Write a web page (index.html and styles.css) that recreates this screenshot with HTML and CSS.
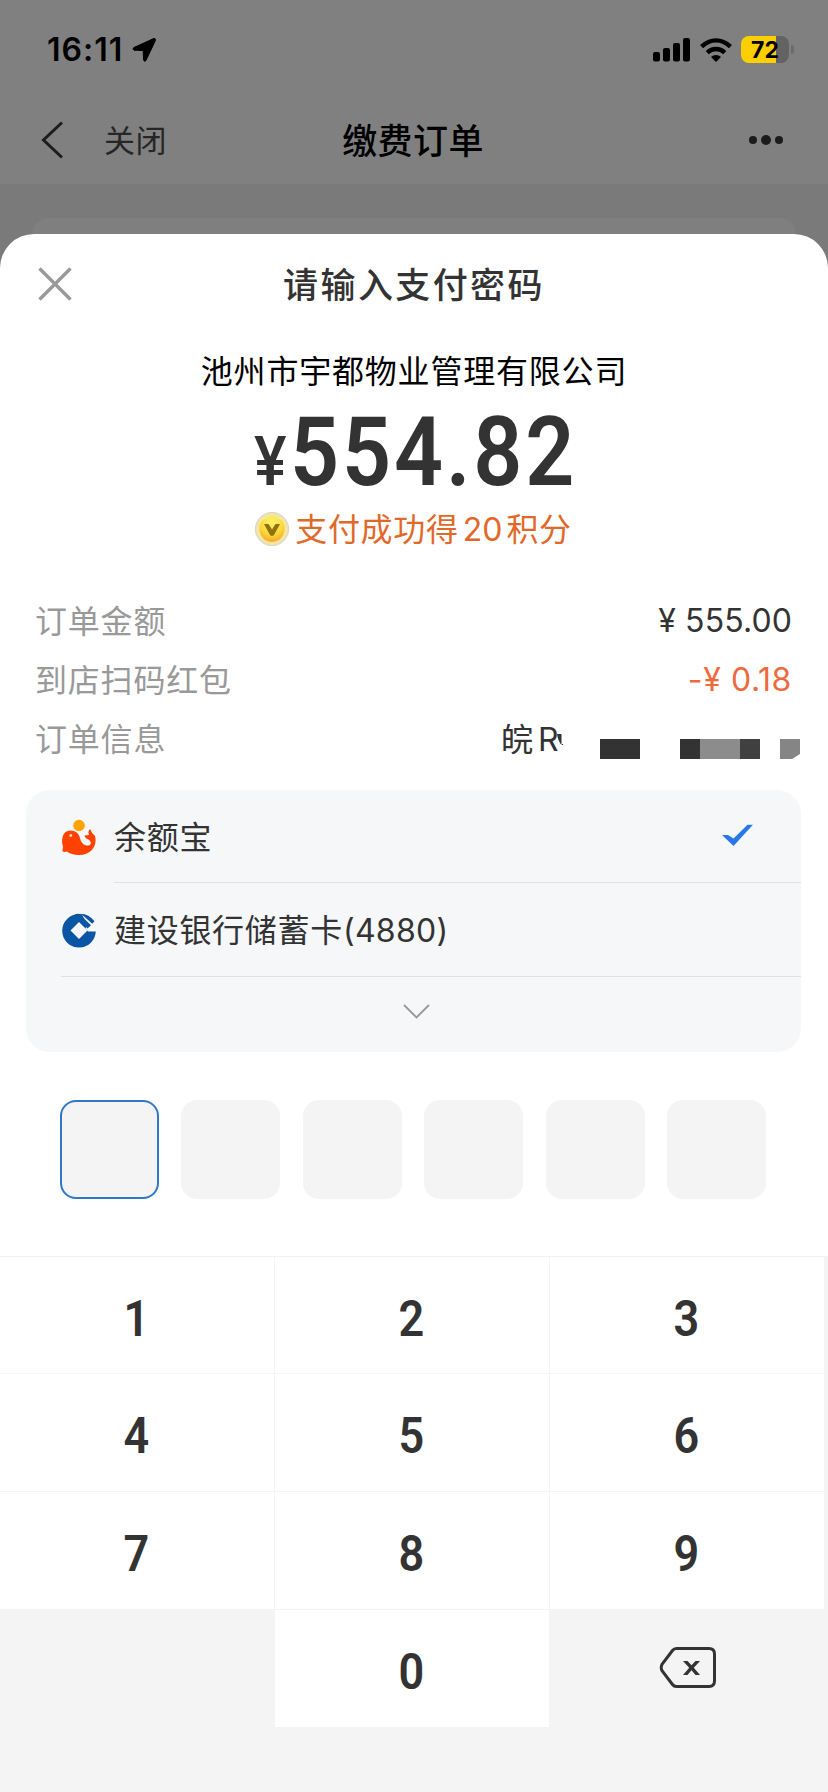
FILE: index.html
```html
<!DOCTYPE html>
<html lang="zh-CN">
<head>
<meta charset="utf-8">
<title>缴费订单</title>
<link rel="stylesheet" href="styles.css">
</head>
<body>
<div class="screen">
  <header class="top">
    <div class="status">
      <span class="time">16:11</span>
      <svg class="locate" width="26" height="26" viewBox="0 0 26 26"><path d="M22.6 1.6 2.8 10.6Q1 12.3 3 13.2L12.2 13.6 12.6 23.2Q13.6 25.2 15 23.4L24.5 3.2Q24.6 1 22.6 1.6Z" fill="#000" stroke="#000" stroke-linejoin="round"/></svg>
      <svg class="signal" width="37" height="24" viewBox="0 0 37 24"><rect y="14" width="7" height="9.5" rx="2"/><rect x="10" y="10" width="7" height="13.5" rx="2"/><rect x="20" y="5" width="7" height="18.5" rx="2"/><rect x="30" y="0" width="7" height="23.5" rx="2"/></svg>
      <svg class="wifi" width="32" height="24" viewBox="0 0 32 24"><g fill="none" stroke="#000" stroke-width="4.4"><path d="M1.6 8.6Q8 2.4 16 2.4T30.4 8.6"/><path d="M7.2 14.6Q11 11 16 11T24.8 14.6"/></g><path d="M16 24 11 19Q13 17 16 17T21 19Z"/></svg>
      <div class="battery"><span>72</span></div>
      <i class="battery-tip"></i>
    </div>
    <nav class="nav">
      <div class="nav-left">
        <svg width="23" height="38" viewBox="0 0 23 38"><path d="M21 1.5 2.500 19 21 36.5" fill="none" stroke="#1c1c1c" stroke-width="3"/></svg>
        <span>关闭</span>
      </div>
      <h1 class="nav-title">缴费订单</h1>
      <svg class="more" width="36" height="12" viewBox="0 0 36 12"><circle cx="5" cy="6" r="4"/><circle cx="18" cy="6" r="5"/><circle cx="31" cy="6" r="4"/></svg>
    </nav>
  </header>
  <div class="behind"><div class="behind-card"></div></div>

  <main class="sheet">
    <div class="sheet-head">
      <svg class="close" width="34" height="34" viewBox="0 0 34 34"><path d="M1.5 1.5 32.5 32.5M32.5 1.5 1.5 32.5" stroke="#999" stroke-width="3.4"/></svg>
      <h2>请输入支付密码</h2>
    </div>
    <p class="merchant">池州市宇都物业管理有限公司</p>
    <p class="amount"><span class="yen">¥</span><span class="sum">554.82</span></p>
    <p class="points">
      <svg width="36" height="36" viewBox="0 0 36 36">
        <defs><radialGradient id="coin" cx=".5" cy=".25" r=".8"><stop offset="0" stop-color="#fff36b"/><stop offset=".6" stop-color="#fbd63c"/><stop offset="1" stop-color="#eda527"/></radialGradient></defs>
        <circle cx="18" cy="18" r="16.6" fill="#ece2bd" stroke="#ddd5b4"/>
        <circle cx="18" cy="18" r="14.3" fill="#fae98a"/>
        <path d="M18 4.5 28 9.5Q31 13 30.5 20C29 27 24 31 18 31S7 27 5.500 20Q5 13 8 9.500Z" fill="url(#coin)"/>
        <path d="M10 13H14.500L18 18.500 21.500 13H26L20 24Q18 26 16 24Z" fill="#91720e"/>
      </svg>
      <span>支付成功得<b>20</b>积分</span>
    </p>

    <dl class="details">
      <div><dt>订单金额</dt><dd>¥ 555.00</dd></div>
      <div><dt>到店扫码红包</dt><dd class="discount">-¥ 0.18</dd></div>
      <div><dt>订单信息</dt><dd class="plate"><span>皖</span><span class="letter">R</span>
        <svg width="243" height="44" viewBox="0 0 243 44"><path d="M0 17H4.500V28Q1 24 0 17ZM5 27h1v1H5Z" fill="#333"/><path d="M43 22h40v20H43zM123 22h20v20h-20z" fill="#333"/><path d="M143 22h40v20h-40z" fill="#8c8c8c"/><path d="M183 22h20v20h-20z" fill="#404040"/><path d="M223 22h20v15l-8 5h-12z" fill="#858585"/></svg>
      </dd></div>
    </dl>

    <section class="methods">
      <div class="method">
        <svg width="36" height="38" viewBox="0 0 36 38"><circle cx="18" cy="7.500" r="5.800" fill="#ffa300"/><path d="M1.200 33Q2.600 29 1.200 25.500C.5 17 4 12.500 9.500 12.500 14.500 12.500 18 15.500 19 20 20 25 23.500 28 27.500 27.500 30.500 26.500 30.500 23.500 27.500 21.500 25 20.500 23.500 19 23.500 17.500L28 17Q26.500 13 29 11 31 16 34 18C36.500 27 31 37 18 37 12.500 37 8.500 35.500 6 33.500Q3 34.500 1.200 33Z" fill="#ff4200"/><circle cx="9.800" cy="17.500" r="1.400" fill="#ffd9cc"/></svg>
        <span class="name">余额宝</span>
        <svg class="check" width="32" height="24" viewBox="0 0 32 24"><path d="M0 12H6L11.500 15.600 25.500 1.800H31L11.500 23Z" fill="#2a78e8"/></svg>
      </div>
      <div class="method card-method">
        <svg width="36" height="38" viewBox="0 0 36 38"><circle cx="18" cy="19.800" r="16.800" fill="#0b56a4"/><path d="M18 11 26.500 19.500 18 28 9.500 19.500Z" fill="#f5f7fa"/><path d="M20 1 26 14 24.500 17.500 27 20.500H36V10L26 1Z" fill="#f5f7fa"/><path d="M14 3.500Q16 2.500 18.500 3L30 14.200 26.500 17.500Z" fill="#0b56a4"/><path d="M19.500 2.700Q28 3 33.500 10.300L31.200 12.700 21.500 4Z" fill="#0b56a4"/></svg>
        <span class="name">建设银行储蓄卡<b>(4880)</b></span>
      </div>
      <div class="expand"><svg width="27" height="16" viewBox="0 0 27 16"><path d="M1 1 13.500 13.500 26 1" fill="none" stroke="#999" stroke-width="1.800"/></svg></div>
    </section>

    <div class="pin"><i class="active"></i><i></i><i></i><i></i><i></i><i></i></div>

    <div class="keypad">
      <button><span>1</span></button><button><span>2</span></button><button><span>3</span></button>
      <button><span>4</span></button><button><span>5</span></button><button><span>6</span></button>
      <button><span>7</span></button><button><span>8</span></button><button><span>9</span></button>
      <button class="blank"></button><button><span>0</span></button>
      <button class="blank"><svg width="58" height="44" viewBox="0 0 58 44"><path d="M17.500 2.500H50Q55.500 2.500 55.500 8V35Q55.500 40.500 50 40.500H17.500Q15 40.500 13.500 38.500L3.200 25Q1.200 21.500 3.200 18L13.500 4.500Q15 2.500 17.500 2.500Z" fill="none" stroke="#333" stroke-width="3"/><path d="M24 15H28.500L32.500 19.300 36.500 15H41L34.800 21.700 41 29H36.500L32.500 24.200 28.500 29H24L30.200 21.700Z" fill="#333"/></svg></button>
    </div>
  </main>
</div>
</body>
</html>
```
FILE: styles.css
```css
* { box-sizing: border-box; margin: 0; padding: 0; }
body { width: 828px; background: #7a7a7a; font-family: Inter, "Noto Sans CJK SC", sans-serif; color: #333; }
svg { display: block; flex: none; }
.screen { height: 1792px; display: flex; flex-direction: column; overflow: hidden; }

.top { height: 184px; background: #808080; }
.status { height: 99px; padding: 0 34px 0 47px; display: flex; align-items: center; color: #000; }
.time { font-size: 32px; font-weight: 600; line-height: 40px; width: 84px; letter-spacing: 1px; }
.signal { margin-left: auto; }
.wifi { margin-left: 10px; }
.battery { width: 48px; height: 27px; margin-left: 9px; border-radius: 8px; background: linear-gradient(90deg, #fccf00 35px, #636363 35px); text-align: center; font-size: 23px; font-weight: 700; line-height: 28px; }
.battery-tip { width: 3px; height: 9px; margin-left: 2px; border-radius: 0 4px 4px 0; background: #6b6b6b; }
.nav { height: 82px; padding: 0 44px 0 41px; display: grid; grid-template-columns: 1fr auto 1fr; align-items: center; }
.nav-left { display: flex; align-items: center; gap: 40px; font-family: "Noto Sans CJK SC", sans-serif; font-size: 31px; line-height: 40px; letter-spacing: .5px; color: #262626; }
.nav-left span { padding-bottom: 3px; }
.nav-title { padding: 0 0 3px 1px; font-family: "Noto Sans CJK SC", sans-serif; font-size: 35px; font-weight: 500; line-height: 46px; letter-spacing: .4px; color: #000; }
.more { justify-self: end; fill: #1c1c1c; }
.behind { height: 50px; padding: 34px 32px 0; background: #7a7a7a; }
.behind-card { height: 16px; border-radius: 16px 16px 0 0; background: #7f7f7f; }

.sheet { flex: 1; background: #fff; border-radius: 34px 34px 0 0; display: flex; flex-direction: column; }
.sheet-head { height: 102px; padding: 0 38px; display: grid; grid-template-columns: 34px 1fr 34px; align-items: center; }
.sheet-head svg { margin-bottom: 2px; }
.sheet-head h2 { padding-bottom: 4px; font-family: "Noto Sans CJK SC", sans-serif; font-size: 35px; font-weight: 500; line-height: 46px; letter-spacing: 2.4px; text-align: center; }
.merchant { height: 70px; font-family: "Noto Sans CJK SC", sans-serif; font-size: 32px; line-height: 67px; letter-spacing: .8px; text-align: center; color: #000; }
.amount { height: 90px; padding-top: 1px; display: flex; justify-content: center; align-items: baseline; font-family: Roboto, sans-serif; font-weight: 600; line-height: 90px; }
.yen { font-size: 68px; font-weight: 500; width: 36px; transform: scaleX(.9); transform-origin: 0 50%; }
.sum { width: 284px; font-size: 95.5px; letter-spacing: 3.200px; white-space: nowrap; transform: scaleX(.9); transform-origin: 0 50%; }
.points { height: 68px; padding: 0 2px 3px 0; display: flex; justify-content: center; align-items: center; gap: 5px; font-family: "Noto Sans CJK SC", sans-serif; font-size: 32px; line-height: 40px; letter-spacing: .7px; color: #e0692a; }
b { font-family: Inter, sans-serif; font-weight: 400; font-size: 32px; letter-spacing: 0; }
.points b { margin: 0 4px; }

.details { padding: 25px 37px 0 35px; height: 226px; }
.details > div { height: 59.400px; display: flex; justify-content: space-between; align-items: center; font-size: 32px; line-height: 40px; }
dt { font-family: "Noto Sans CJK SC", sans-serif; letter-spacing: .8px; color: #999; }
dd { font-size: 32px; padding-top: 4px; margin-right: -1px; letter-spacing: .1px; }
.discount { color: #ee6a3c; letter-spacing: .6px; }
.plate { display: flex; align-items: center; margin-right: -9px; }
.plate span { padding-top: 2px; }
.letter { width: 18px; margin: 0 1px 0 5px; }

.methods { margin: 0 27px 0 26px; height: 262px; border-radius: 24px; background: #f5f7f9; }
.method { height: 93px; padding: 0 47px 0 35px; display: flex; align-items: center; gap: 17px; font-family: "Noto Sans CJK SC", sans-serif; font-size: 32px; line-height: 40px; letter-spacing: .7px; background: linear-gradient(#dfe1e4, #dfe1e4) 88px 100% / 100% 1px no-repeat; }
.name { padding-bottom: 3px; }
.card-method { height: 94px; background-position: 35px 100%; }
.card-method .name { padding-bottom: 1px; }
.method b { font-size: 32px; letter-spacing: .3px; }
.check { margin: 0 0 4px auto; }
.expand { height: 75px; display: flex; justify-content: center; padding-top: 27px; padding-left: 5px; }

.pin { margin: 48px 62px 57px 60px; display: flex; justify-content: space-between; }
.pin i { width: 99px; height: 99px; border-radius: 16px; background: #f4f4f4; }
.pin .active { border: 2px solid #2f78c8; }

.keypad { flex: 1; border-top: 1px solid #f2f2f2; padding-right: 4px; background: #f4f4f4; display: grid; grid-template-columns: repeat(3, 1fr); grid-template-rows: 116px repeat(3, 117px); gap: 1px; align-content: start; }
.keypad button { border: 0; background: #fff; padding: 7px 2px 0 0; font: 600 50px/60px Roboto, sans-serif; color: #333; display: flex; align-items: center; justify-content: center; }
.keypad span { transform: scaleX(.9); }
.keypad .blank { background: transparent; padding: 0 0 2px 2px; }
```
